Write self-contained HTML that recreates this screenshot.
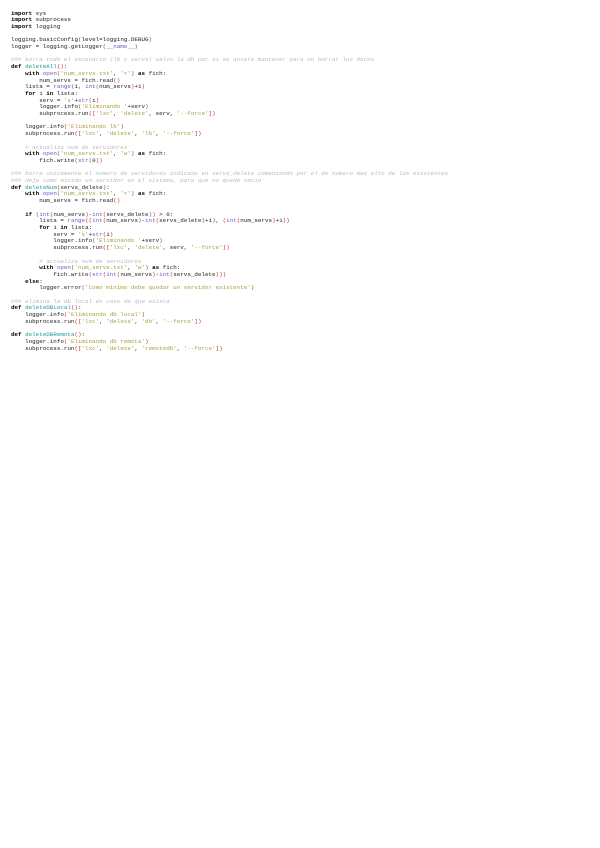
<!DOCTYPE html>
<html><head><meta charset="utf-8"><style>
html,body{margin:0;padding:0;background:#fff;width:600px;height:848px;overflow:hidden}
pre{position:absolute;left:11px;top:10.5px;margin:0;font-family:"Liberation Mono",monospace;font-size:5.88px;line-height:6.7px;color:#222}
.k{font-weight:bold;color:#000}
.b{color:#6a5acd}
.s{color:#a8a040}
.p{color:#c0392b}
.f{color:#1a9a9a}
.c{color:#bbb;font-style:italic}
</style></head><body><pre><span class="k">import</span> sys
<span class="k">import</span> subprocess
<span class="k">import</span> logging

logging.basicConfig<span class="p">(</span>level=logging.DEBUG<span class="p">)</span>
logger = logging.getLogger<span class="p">(</span><span class="b">__name__</span><span class="p">)</span>

<span class="c">### borra todo el escenario (lb y servs) salvo la db por si se quiere mantener para no borrar los datos</span>
<span class="k">def</span> <span class="f">deleteAll</span><span class="p">()</span>:
    <span class="k">with</span> <span class="b">open</span><span class="p">(</span><span class="s">'num_servs.txt'</span>, <span class="s">'r'</span><span class="p">)</span> <span class="k">as</span> fich:
        num_servs = fich.read<span class="p">()</span>
    lista = <span class="b">range</span><span class="p">(</span>1, <span class="b">int</span><span class="p">(</span>num_servs<span class="p">)</span>+1<span class="p">)</span>
    <span class="k">for</span> i <span class="k">in</span> lista:
        serv = <span class="s">'s'</span>+<span class="b">str</span><span class="p">(</span>i<span class="p">)</span>
        logger.info<span class="p">(</span><span class="s">'Eliminando '</span>+serv<span class="p">)</span>
        subprocess.run<span class="p">([</span><span class="s">'lxc'</span>, <span class="s">'delete'</span>, serv, <span class="s">'--force'</span><span class="p">])</span>

    logger.info<span class="p">(</span><span class="s">'Eliminando lb'</span><span class="p">)</span>
    subprocess.run<span class="p">([</span><span class="s">'lxc'</span>, <span class="s">'delete'</span>, <span class="s">'lb'</span>, <span class="s">'--force'</span><span class="p">])</span>

    <span class="c"># actualiza num de servidores</span>
    <span class="k">with</span> <span class="b">open</span><span class="p">(</span><span class="s">'num_servs.txt'</span>, <span class="s">'w'</span><span class="p">)</span> <span class="k">as</span> fich:
        fich.write<span class="p">(</span><span class="b">str</span><span class="p">(</span>0<span class="p">))</span>

<span class="c">### borra unicamente el numero de servidores indicado en servs_delete comenzando por el de numero mas alto de los existentes</span>
<span class="c">### deja como minimo un servidor en el sistema, para que no quede vacio</span>
<span class="k">def</span> <span class="f">deleteNum</span><span class="p">(</span>servs_delete<span class="p">)</span>:
    <span class="k">with</span> <span class="b">open</span><span class="p">(</span><span class="s">'num_servs.txt'</span>, <span class="s">'r'</span><span class="p">)</span> <span class="k">as</span> fich:
        num_servs = fich.read<span class="p">()</span>

    <span class="k">if</span> <span class="p">(</span><span class="b">int</span><span class="p">(</span>num_servs<span class="p">)</span>-<span class="b">int</span><span class="p">(</span>servs_delete<span class="p">))</span> &gt; 0:
        lista = <span class="b">range</span><span class="p">((</span><span class="b">int</span><span class="p">(</span>num_servs<span class="p">)</span>-<span class="b">int</span><span class="p">(</span>servs_delete<span class="p">)</span>+1<span class="p">)</span>, <span class="p">(</span><span class="b">int</span><span class="p">(</span>num_servs<span class="p">)</span>+1<span class="p">))</span>
        <span class="k">for</span> i <span class="k">in</span> lista:
            serv = <span class="s">'s'</span>+<span class="b">str</span><span class="p">(</span>i<span class="p">)</span>
            logger.info<span class="p">(</span><span class="s">'Eliminando '</span>+serv<span class="p">)</span>
            subprocess.run<span class="p">([</span><span class="s">'lxc'</span>, <span class="s">'delete'</span>, serv, <span class="s">'--force'</span><span class="p">])</span>

        <span class="c"># actualiza num de servidores</span>
        <span class="k">with</span> <span class="b">open</span><span class="p">(</span><span class="s">'num_servs.txt'</span>, <span class="s">'w'</span><span class="p">)</span> <span class="k">as</span> fich:
            fich.write<span class="p">(</span><span class="b">str</span><span class="p">(</span><span class="b">int</span><span class="p">(</span>num_servs<span class="p">)</span>-<span class="b">int</span><span class="p">(</span>servs_delete<span class="p">)))</span>
    <span class="k">else</span>:
        logger.error<span class="p">(</span><span class="s">'Como minimo debe quedar un servidor existente'</span><span class="p">)</span>

<span class="c">### elimina la db local en caso de que exista</span>
<span class="k">def</span> <span class="f">deleteDBLocal</span><span class="p">()</span>:
    logger.info<span class="p">(</span><span class="s">'Eliminando db local'</span><span class="p">)</span>
    subprocess.run<span class="p">([</span><span class="s">'lxc'</span>, <span class="s">'delete'</span>, <span class="s">'db'</span>, <span class="s">'--force'</span><span class="p">])</span>

<span class="k">def</span> <span class="f">deleteDBRemota</span><span class="p">()</span>:
    logger.info<span class="p">(</span><span class="s">'Eliminando db remota'</span><span class="p">)</span>
    subprocess.run<span class="p">([</span><span class="s">'lxc'</span>, <span class="s">'delete'</span>, <span class="s">'remotedb'</span>, <span class="s">'--force'</span><span class="p">])</span>
</pre></body></html>
